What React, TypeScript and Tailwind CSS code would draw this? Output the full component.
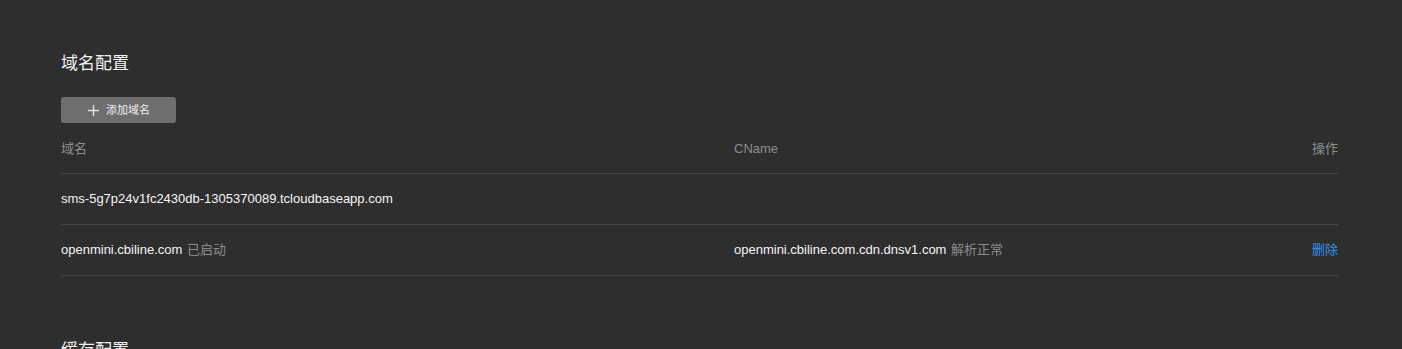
import React from "react";

const font = { fontFamily: '"Liberation Sans", "Noto Sans CJK SC", sans-serif' };

export default function App() {
  return (
    <div className="w-[1402px] h-[349px] overflow-hidden bg-[#2e2e2e] text-[#e6e6e6]" style={font}>
      <div className="pl-[61px] pr-[64px] pt-[52px]">
        <h2 className="text-[17px] leading-[24px] text-[#f0f0f0] font-normal">域名配置</h2>
        <button className="mt-[21px] flex items-center justify-center gap-[6px] w-[115px] h-[26px] rounded-[3px] bg-[#6e6e6e] text-[11px] text-[#f0f0f0]">
          <svg width="13" height="13" viewBox="0 0 13 13" fill="none">
            <path d="M6.5 1v11M1 6.5h11" stroke="#e0e0e0" strokeWidth="1.4" />
          </svg>
          <span>添加域名</span>
        </button>
        <div className="mt-[1px]">
          <div className="grid grid-cols-[673px_1fr_auto] items-center h-[50px] border-b border-[#454545] text-[13px] text-[#8c8c8c]">
            <span>域名</span>
            <span>CName</span>
            <span className="text-right">操作</span>
          </div>
          <div className="grid grid-cols-[673px_1fr_auto] items-center h-[51px] border-b border-[#454545] text-[13px]">
            <span className="text-[#f5f5f5]">sms-5g7p24v1fc2430db-1305370089.tcloudbaseapp.com</span>
            <span></span>
            <span></span>
          </div>
          <div className="grid grid-cols-[673px_1fr_auto] items-center h-[51px] border-b border-[#454545] text-[13px]">
            <span className="text-[#f5f5f5]">
              openmini.cbiline.com <span className="ml-[1px] text-[#8c8c8c]">已启动</span>
            </span>
            <span className="text-[#f5f5f5]">
              openmini.cbiline.com.cdn.dnsv1.com <span className="ml-[1px] text-[#8c8c8c]">解析正常</span>
            </span>
            <span className="text-right text-[#2f8ff0] cursor-pointer">删除</span>
          </div>
        </div>
        <h2 className="mt-[63px] text-[17px] leading-[24px] text-[#f0f0f0] font-normal">缓存配置</h2>
      </div>
    </div>
  );
}
